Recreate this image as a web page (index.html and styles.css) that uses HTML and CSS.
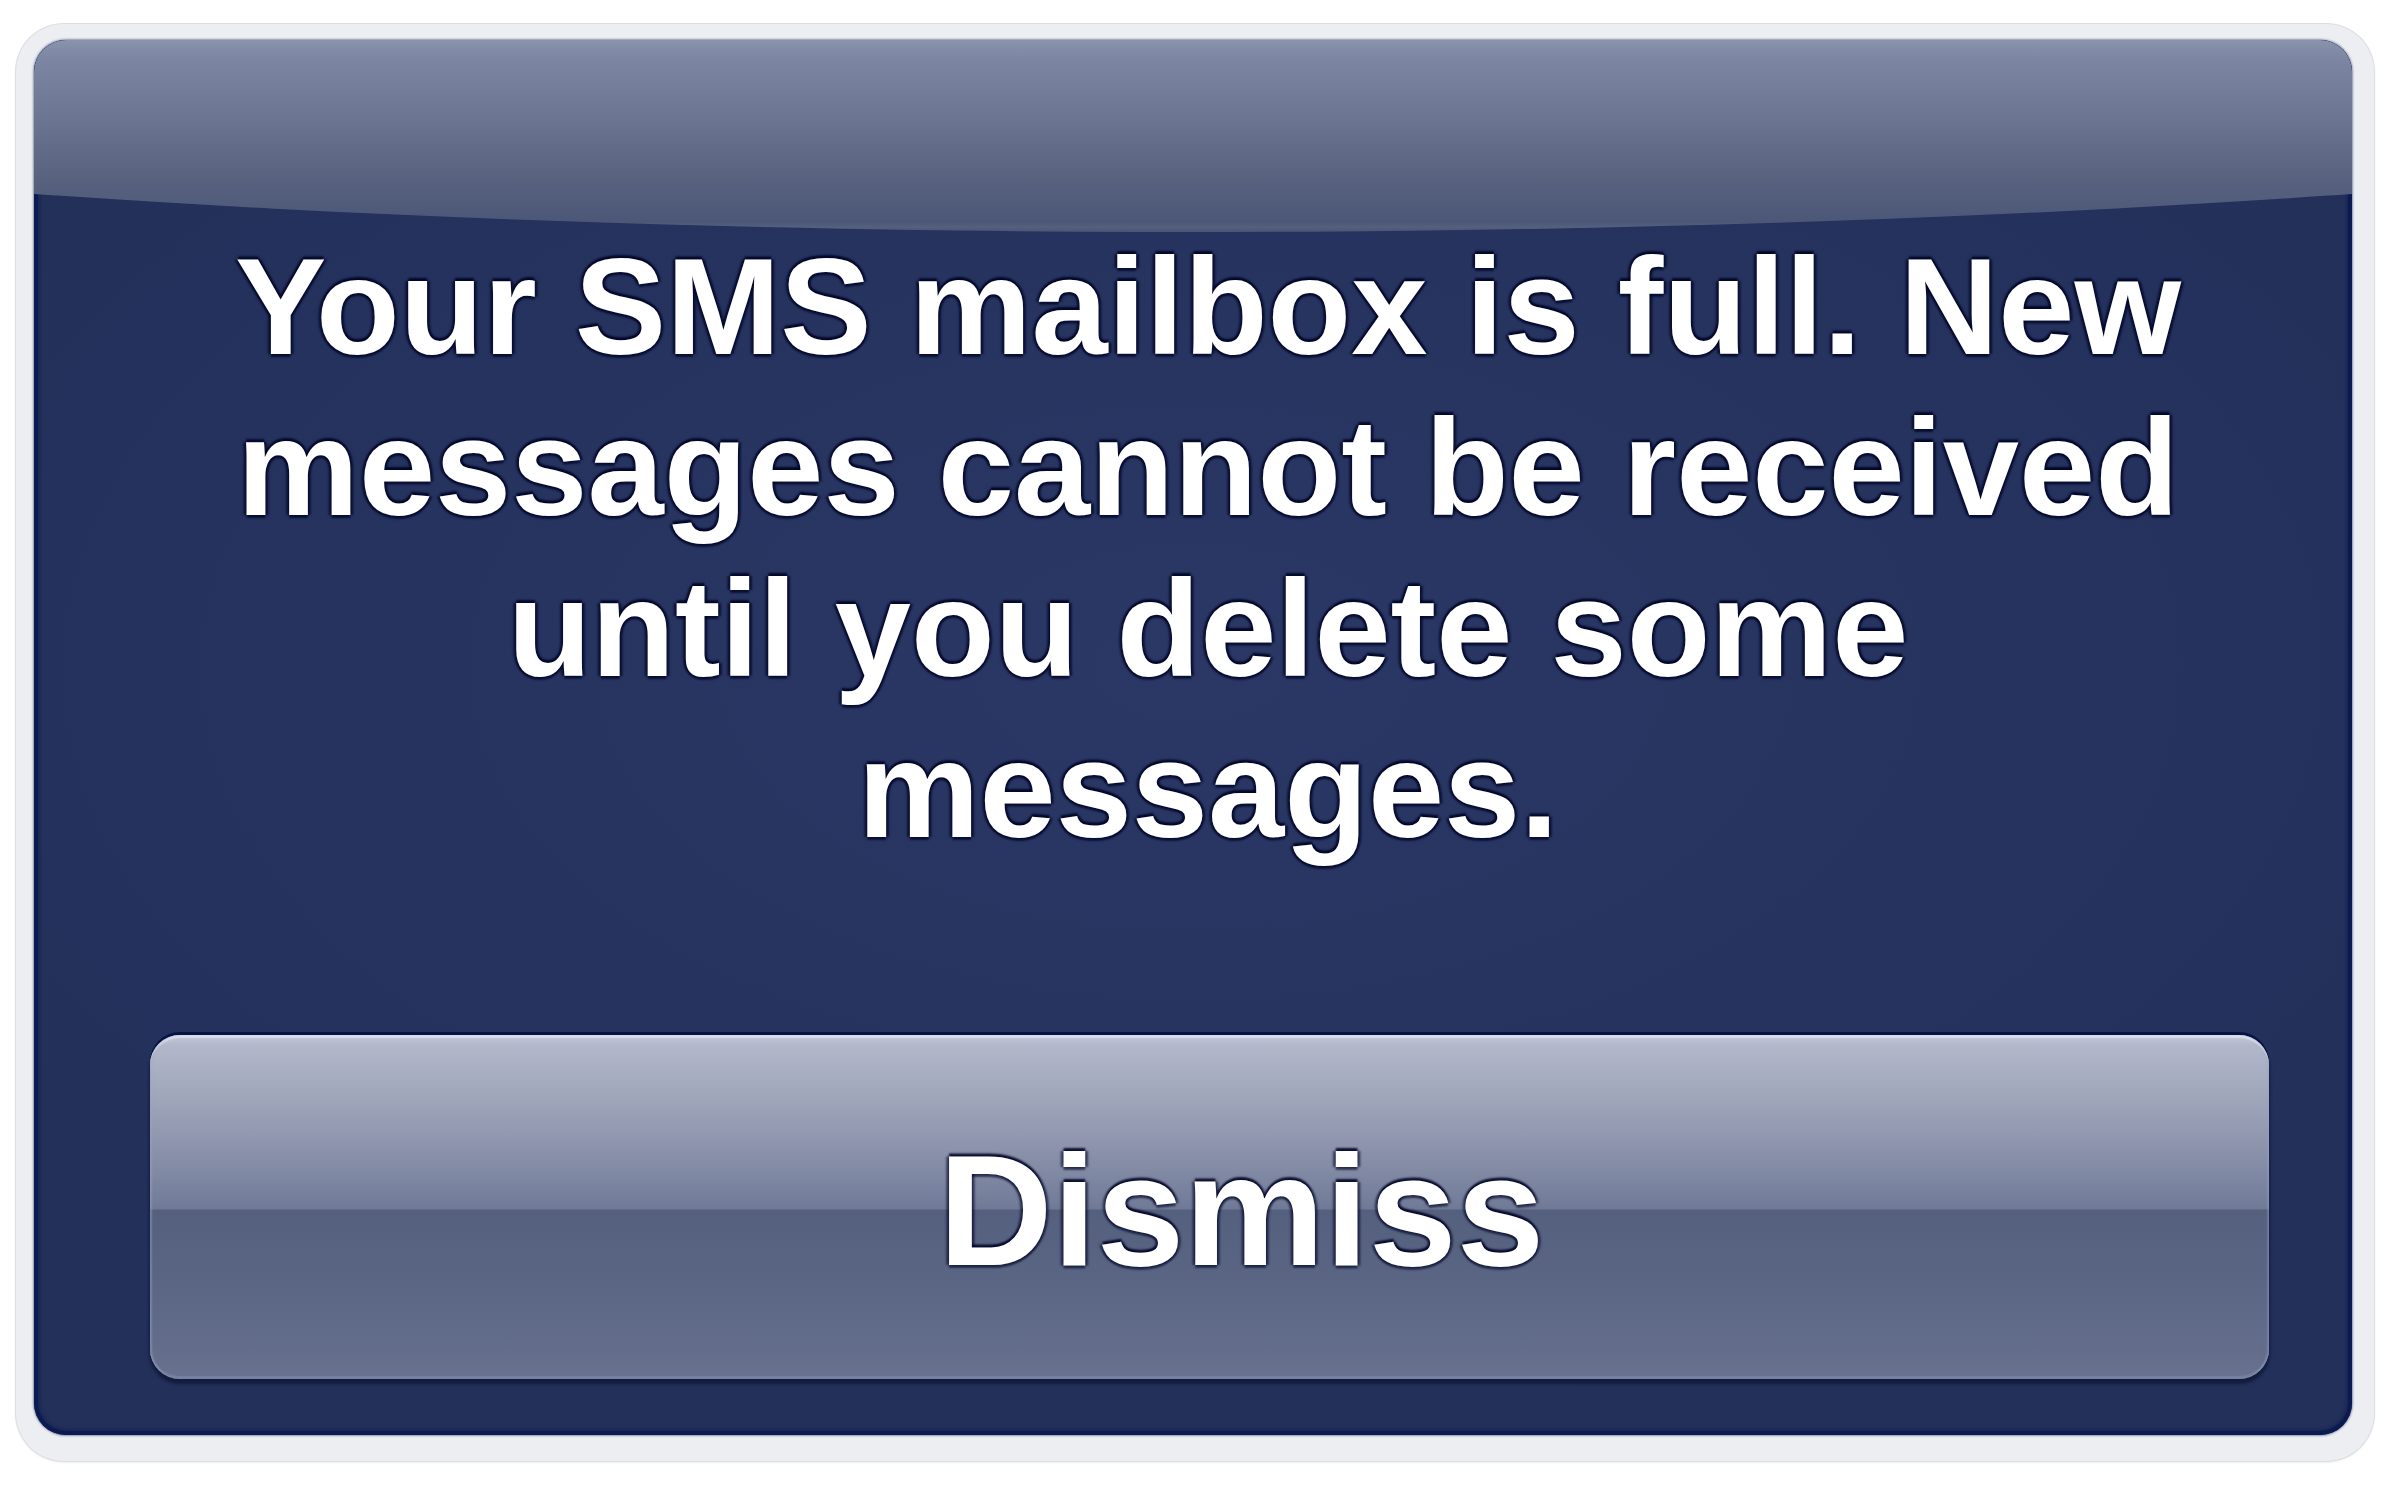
FILE: index.html
```html
<!DOCTYPE html>
<html lang="en">
<head>
<meta charset="utf-8">
<title>SMS mailbox full</title>
<link rel="stylesheet" href="styles.css">
</head>
<body>
  <div class="alert-frame">
    <div class="alert" role="alertdialog" aria-labelledby="alert-msg">
      <p class="alert-message" id="alert-msg">Your SMS mailbox is full. New<br>messages cannot be received<br>until you delete some<br>messages.</p>
      <div class="alert-actions">
        <button class="alert-button" type="button">Dismiss</button>
      </div>
    </div>
  </div>
</body>
</html>
```

FILE: styles.css
```css
html, body {
  margin: 0;
  padding: 0;
  background: #ffffff;
}

body {
  width: 2400px;
  height: 1496px;
  overflow: hidden;
  font-family: "Liberation Sans", Arial, Helvetica, sans-serif;
}

/* light rim around the alert sheet */
.alert-frame {
  box-sizing: border-box;
  width: 2358px;
  height: 1437px;
  margin: 24px 0 0 16px;
  padding: 16px 22px 26px 18px;
  border-radius: 48px;
  background: #eceef2;
  box-shadow: 0 0 0 1px #dcdee3, 0 1px 3px rgba(0, 0, 0, 0.12);
}

/* the navy alert body */
.alert {
  position: relative;
  box-sizing: border-box;
  width: 2318px;
  height: 1395px;
  border-radius: 32px;
  overflow: hidden;
  display: flex;
  flex-direction: column;
  background:
    radial-gradient(ellipse 60% 55% at 50% 45%, #2b3865 0%, #26335f 60%, #22305a 100%);
  box-shadow:
    inset 0 0 0 4px #0b1a50,
    inset 0 0 3px 6px rgba(20, 32, 80, 0.6),
    0 0 2px 1px rgba(60, 70, 110, 0.55);
}

/* curved glass highlight across the top */
.alert::before {
  content: "";
  position: absolute;
  left: 50%;
  top: -420px;
  width: 4800px;
  height: 612px;
  margin-left: -2400px;
  border-radius: 50%;
  background: linear-gradient(to bottom,
    #8a93ad 0px,
    #8a93ad 420px,
    #7c85a1 440px,
    #6b7491 500px,
    #58627f 560px,
    #4c5778 602px,
    #55607e 607px,
    #4a5576 612px);
  pointer-events: none;
}

.alert-message {
  position: relative;
  margin: 0;
  padding: 186px 0 0 30px;
  height: 644px;
  color: #ffffff;
  font-weight: 700;
  font-size: 137px;
  line-height: 161px;
  text-align: center;
  text-shadow:
    0 -3px 2px rgba(0, 6, 40, 0.95),
    0 3px 2px rgba(0, 6, 40, 0.75),
    3px 0 2px rgba(0, 6, 40, 0.65),
    -3px 0 2px rgba(0, 6, 40, 0.65);
}

.alert-actions {
  position: relative;
  display: flex;
  margin: 165px 83px 0 116px;
}

.alert-button {
  flex: 1;
  height: 344px;
  margin: 0;
  padding: 6px 0 0 64px;
  border: 0;
  border-radius: 30px;
  color: #ffffff;
  font-family: "Liberation Sans", Arial, Helvetica, sans-serif;
  font-weight: 700;
  font-size: 158px;
  line-height: 1;
  text-align: center;
  background: linear-gradient(to bottom,
    #c6cadb 0px,
    #b2b8ca 10px,
    #a1a7bb 60px,
    #8b92ab 115px,
    #737d99 168px,
    #6f7995 174px,
    #55607f 175px,
    #5a6584 240px,
    #616b8a 300px,
    #69738f 344px);
  box-shadow:
    0 -3px 0 0 #051347,
    0 4px 3px 1px rgba(14, 22, 52, 0.75),
    inset 3px 0 2px -1px rgba(150, 160, 195, 0.45),
    inset -3px 0 2px -1px rgba(150, 160, 195, 0.35),
    inset 0 3px 1px 0 rgba(225, 228, 242, 0.75),
    inset 0 -3px 1px 0 rgba(125, 135, 168, 0.7);
  text-shadow:
    0 -3px 2px rgba(0, 6, 40, 0.9),
    0 3px 2px rgba(0, 6, 40, 0.6),
    3px 0 2px rgba(0, 6, 40, 0.5),
    -3px 0 2px rgba(0, 6, 40, 0.5);
  cursor: pointer;
}
```
